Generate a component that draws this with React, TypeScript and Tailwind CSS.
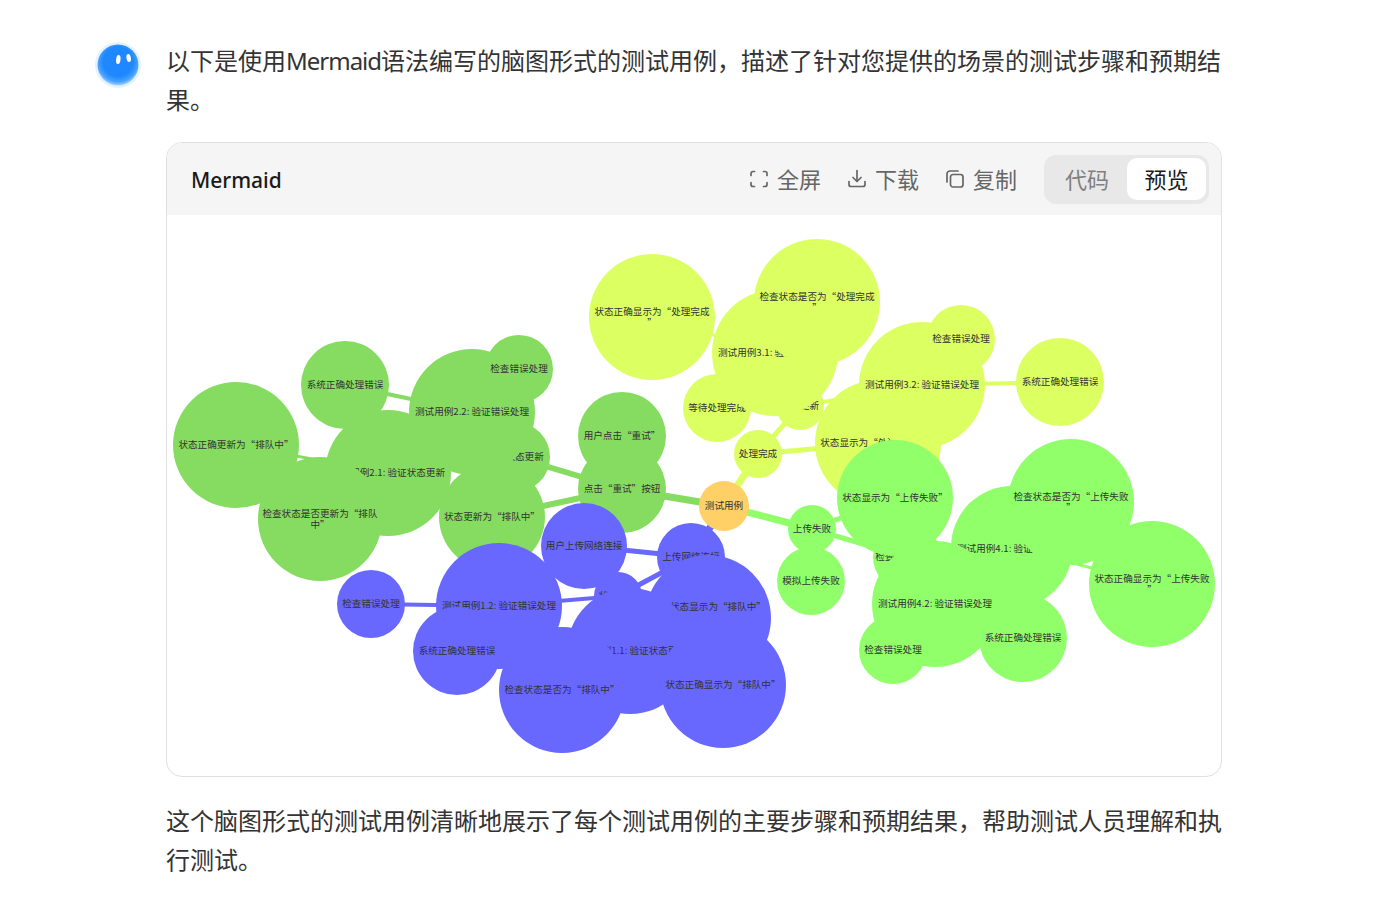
import React from "react";

type N = { x: number; y: number; r: number; t: string[]; c: string; dy?: number; tx?: number };
type E = [number, number, number, number, number, string];

const G = "#86dc60";
const P = "#6868ff";
const Y = "#dcff62";
const L = "#90ff6a";
const O = "#ffd066";

const edges: E[] = [
  [724, 506, 622, 489, 7, G],
  [622, 489, 622, 436, 5, G],
  [622, 489, 515, 457, 6, G],
  [622, 489, 492, 517, 6, G],
  [388, 473, 236, 445, 3, G],
  [472, 412, 345, 385, 4, G],
  [724, 506, 691, 557, 7, P],
  [691, 557, 584, 546, 5, P],
  [691, 557, 618, 596, 5, P],
  [618, 596, 499, 606, 4, P],
  [499, 606, 371, 604, 4, P],
  [724, 506, 758, 454, 7, Y],
  [758, 454, 800, 406, 5, Y],
  [758, 454, 878, 443, 5, Y],
  [800, 406, 922, 385, 4, Y],
  [775, 353, 652, 317, 3, Y],
  [922, 385, 1060, 382, 4, Y],
  [724, 506, 812, 529, 7, L],
  [812, 529, 895, 497, 5, L],
  [812, 529, 907, 557, 5, L],
  [1012, 547, 1152, 584, 3, L],
];

const nodes: N[] = [
  { x: 622, y: 436, r: 44, t: ["用户点击“重试”"], c: G },
  { x: 622, y: 489, r: 44, t: ["点击“重试”按钮"], c: G },
  { x: 515, y: 457, r: 35, t: ["等待状态更新"], c: G },
  { x: 345, y: 385, r: 44, t: ["系统正确处理错误"], c: G },
  { x: 472, y: 412, r: 63, t: ["测试用例2.2: 验证错误处理"], c: G },
  { x: 519, y: 369, r: 34, t: ["检查错误处理"], c: G },
  { x: 388, y: 473, r: 63, t: ["测试用例2.1: 验证状态更新"], c: G },
  { x: 236, y: 445, r: 63, t: ["状态正确更新为“排队中”"], c: G },
  { x: 320, y: 519, r: 62, t: ["检查状态是否更新为“排队", "中”"], c: G },
  { x: 492, y: 517, r: 53, t: ["状态更新为“排队中”"], c: G },

  { x: 618, y: 596, r: 24, t: ["状态更新"], c: P },
  { x: 691, y: 557, r: 34, t: ["上传网络连接"], c: P },
  { x: 371, y: 604, r: 34, t: ["检查错误处理"], c: P },
  { x: 584, y: 546, r: 43, t: ["用户上传网络连接"], c: P },
  { x: 499, y: 606, r: 63, t: ["测试用例1.2: 验证错误处理"], c: P },
  { x: 457, y: 651, r: 44, t: ["系统正确处理错误"], c: P },
  { x: 708, y: 618, r: 63, t: ["状态显示为“排队中”"], c: P, dy: -11, tx: 10 },
  { x: 630, y: 651, r: 63, t: ["测试用例1.1: 验证状态更新"], c: P },
  { x: 562, y: 690, r: 63, t: ["检查状态是否为“排队中”"], c: P },
  { x: 723, y: 685, r: 63, t: ["状态正确显示为“排队中”"], c: P },

  { x: 652, y: 317, r: 63, t: ["状态正确显示为“处理完成", "”"], c: Y },
  { x: 758, y: 454, r: 24, t: ["处理完成"], c: Y },
  { x: 800, y: 406, r: 24, t: ["状态更新"], c: Y },
  { x: 717, y: 408, r: 34, t: ["等待处理完成"], c: Y },
  { x: 775, y: 353, r: 63, t: ["测试用例3.1: 验证状态更新"], c: Y },
  { x: 817, y: 302, r: 63, t: ["检查状态是否为“处理完成", "”"], c: Y },
  { x: 878, y: 443, r: 63, t: ["状态显示为“处理完成”"], c: Y, tx: -5 },
  { x: 1060, y: 382, r: 44, t: ["系统正确处理错误"], c: Y },
  { x: 922, y: 385, r: 63, t: ["测试用例3.2: 验证错误处理"], c: Y },
  { x: 961, y: 339, r: 34, t: ["检查错误处理"], c: Y },

  { x: 812, y: 529, r: 24, t: ["上传失败"], c: L },
  { x: 811, y: 581, r: 34, t: ["模拟上传失败"], c: L },
  { x: 907, y: 557, r: 34, t: ["检查错误状态"], c: L, tx: -3 },
  { x: 895, y: 498, r: 58, t: ["状态显示为“上传失败”"], c: L },
  { x: 1012, y: 547, r: 61, t: ["测试用例4.1: 验证状态更新"], c: L, tx: 2, dy: 2 },
  { x: 1071, y: 502, r: 63, t: ["检查状态是否为“上传失败", "”"], c: L },
  { x: 1152, y: 584, r: 63, t: ["状态正确显示为“上传失败", "”"], c: L },
  { x: 935, y: 604, r: 63, t: ["测试用例4.2: 验证错误处理"], c: L },
  { x: 1023, y: 638, r: 44, t: ["系统正确处理错误"], c: L },
  { x: 893, y: 650, r: 34, t: ["检查错误处理"], c: L },

  { x: 724, y: 506, r: 25, t: ["测试用例"], c: O },
];

function MindMap() {
  return (
    <svg
      className="block w-[1054px] h-[561px] font-['Noto_Sans_CJK_SC','Noto_Sans',sans-serif]"
      viewBox="167 215 1054 561"
    >
      {edges.map((e, i) => (
        <line key={i} x1={e[0]} y1={e[1]} x2={e[2]} y2={e[3]} stroke={e[5]} strokeWidth={e[4]} />
      ))}
      {nodes.map((n, i) => (
        <g key={i}>
          <circle cx={n.x} cy={n.y} r={n.r} fill={n.c} />
          <text textAnchor="middle" fontSize="9.6" fill="#333333">
            {n.t.map((l, j) => (
              <tspan key={j} x={n.x + (n.tx ?? 0)} y={n.y + 3.2 + (n.dy ?? 0) + (j - (n.t.length - 1) / 2) * 11}>
                {l}
              </tspan>
            ))}
          </text>
        </g>
      ))}
    </svg>
  );
}

function Avatar() {
  return (
    <svg className="block w-[46px] h-[48px] -ml-[1px] shrink-0" viewBox="95 40 46 48">
      <defs>
        <radialGradient id="ball" cx="0.5" cy="0.42" r="0.58">
          <stop offset="0.62" stopColor="#1f87ff" />
          <stop offset="0.85" stopColor="#4aa3ff" />
          <stop offset="1" stopColor="#a8d6ff" />
        </radialGradient>
      </defs>
      <circle cx="118" cy="64" r="23" fill="#e3f2ff" />
      <circle cx="118" cy="64" r="20.5" fill="url(#ball)" />
      <ellipse cx="118.3" cy="58.5" rx="2.2" ry="4.6" fill="#ffffff" transform="rotate(6 118.3 58.5)" />
      <ellipse cx="128.7" cy="57" rx="2.2" ry="4" fill="#ffffff" transform="rotate(-10 128.7 57)" />
    </svg>
  );
}

function ExpandIcon() {
  return (
    <svg viewBox="0 0 20 20" className="w-[20px] h-[20px] -mx-[1px]" fill="none" stroke="#666666" strokeWidth="1.7" strokeLinecap="round" strokeLinejoin="round">
      <path d="M2 6.5V4.5A2 2 0 0 1 4 2.5H5.5" />
      <path d="M14.5 2.5H16A2 2 0 0 1 18 4.5V6.5" />
      <path d="M2 13.5V15.5A2 2 0 0 0 4 17.5H5.5" />
      <path d="M14.5 17.5H16A2 2 0 0 0 18 15.5V13.5" />
    </svg>
  );
}

function DownloadIcon() {
  return (
    <svg viewBox="0 0 20 20" className="w-[20px] h-[20px] -mx-[1px]" fill="none" stroke="#666666" strokeWidth="1.7" strokeLinecap="round" strokeLinejoin="round">
      <path d="M10 1.5V12" />
      <path d="M6 8.5L10 12.5L14 8.5" />
      <path d="M2 12.5V15.5A2 2 0 0 0 4 17.5H16A2 2 0 0 0 18 15.5V12.5" />
    </svg>
  );
}

function CopyIcon() {
  return (
    <svg viewBox="0 0 20 20" className="w-[20px] h-[20px] -mx-[1px]" fill="none" stroke="#666666" strokeWidth="1.7" strokeLinecap="round" strokeLinejoin="round">
      <rect x="5.5" y="5.5" width="12.5" height="12.5" rx="2.5" />
      <path d="M2 13V5A3 3 0 0 1 5 2H13" />
    </svg>
  );
}

function Action({ icon, label }: { icon: React.ReactNode; label: string }) {
  return (
    <div className="flex items-center gap-[9px] text-[22px] leading-[30px] text-[#666666]">
      {icon}
      <span className="pb-[2px]">{label}</span>
    </div>
  );
}

export default function App() {
  return (
    <div className="min-h-[924px] bg-white pt-[41px] pl-[96px] text-[#333333] font-['Noto_Sans_CJK_SC','Noto_Sans',sans-serif]">
      <div className="flex gap-[25px]">
        <Avatar />
        <div className="w-[1056px] shrink-0">
          <p className="-mt-[1px] text-[24px] leading-[39px]">
            以下是使用
            <span className="font-['Noto_Sans',sans-serif] leading-none tracking-[-1px]">Mermaid</span>
            语法编写的脑图形式的测试用例，描述了针对您提供的场景的测试步骤和预期结果。
          </p>
          <div className="mt-[24px] h-[635px] rounded-[16px] border border-[#e0e0e0] overflow-hidden">
            <div className="h-[72px] bg-[#f5f5f5] flex items-center pl-[24px] pr-[12px]">
              <span className="mt-[4px] font-['Noto_Sans',sans-serif] text-[21px] font-medium text-[#1a1a1a]">Mermaid</span>
              <div className="ml-auto flex items-center gap-[27px]">
                <Action icon={<ExpandIcon />} label="全屏" />
                <Action icon={<DownloadIcon />} label="下载" />
                <Action icon={<CopyIcon />} label="复制" />
                <div className="flex h-[49px] w-[165px] items-center rounded-[12px] bg-[#e8e8e8] pl-[3px] pr-[3px]">
                  <span className="w-[80px] pb-[2px] text-center text-[22px] text-[#808080]">代码</span>
                  <span className="flex h-[42px] w-[79px] items-center justify-center rounded-[10px] bg-white pb-[2px] text-[22px] text-[#1a1a1a]">
                    预览
                  </span>
                </div>
              </div>
            </div>
            <MindMap />
          </div>
          <p className="mt-[23px] text-[24px] leading-[39px]">
            这个脑图形式的测试用例清晰地展示了每个测试用例的主要步骤和预期结果，帮助测试人员理解和执行测试。
          </p>
        </div>
      </div>
    </div>
  );
}
